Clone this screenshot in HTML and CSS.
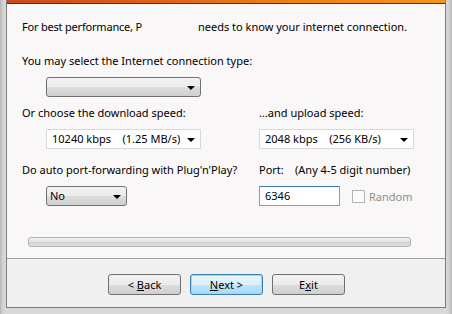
FILE: index.html
```html
<!DOCTYPE html>
<html>
<head>
<meta charset="utf-8">
<link rel="stylesheet" href="styles.css">
</head>
<body>
<div class="frame">
  <div class="dialog">
    <div class="banner"></div>
    <div class="content">
      <p class="intro"><span class="lead">For best performance, P</span><span class="gap"></span>needs to know your internet connection.</p>
      <p class="label">You may select the Internet connection type:</p>
      <div class="combo combo-btn w155"><span class="val"></span><i class="arrow"></i></div>
      <div class="grid">
        <div class="cell">
          <p class="label">Or choose the download speed:</p>
          <div class="combo combo-list w155"><span class="val">10240 kbps    (1.25 MB/s)</span><i class="arrow"></i></div>
        </div>
        <div class="cell">
          <p class="label">...and upload speed:</p>
          <div class="combo combo-list w155 flush"><span class="val">2048 kbps    (256 KB/s)</span><i class="arrow"></i></div>
        </div>
        <div class="cell">
          <p class="label">Do auto port-forwarding with Plug'n'Play?</p>
          <div class="combo combo-btn w81"><span class="val">No</span><i class="arrow"></i></div>
        </div>
        <div class="cell">
          <p class="label port-label"><span class="port-word">Port:</span>(Any 4-5 digit number)</p>
          <div class="port-row">
            <div class="input">6346</div>
            <label class="check"><span class="box"></span>Random</label>
          </div>
        </div>
      </div>
      <div class="progress"></div>
    </div>
    <div class="footer">
      <button class="btn">&lt; <u>B</u>ack</button>
      <button class="btn btn-default"><u>N</u>ext &gt;</button>
      <button class="btn">E<u>x</u>it</button>
    </div>
  </div>
</div>
</body>
</html>
```

FILE: styles.css
```css
html, body {
  margin: 0;
  padding: 0;
}
body {
  width: 452px;
  height: 314px;
  overflow: hidden;
  background: #d6d6d6;
  font-family: "Noto Sans", "Open Sans", sans-serif;
  font-size: 11px;
  color: #000;
}
.frame {
  width: 452px;
  height: 314px;
  box-sizing: border-box;
  padding: 0 6px 6px 6px;
  background: linear-gradient(to right, #b4b4b4 0, #cdcdcd 2px, #d9d9d9 5px, #d9d9d9 446px, #cdcdcd 450px, #b4b4b4 452px);
}
.dialog {
  height: 308px;
  box-sizing: border-box;
  border: 1px solid #7c7c7c;
  border-top: none;
  display: flex;
  flex-direction: column;
  background: #f0f0f0;
}
.banner {
  height: 3px;
  background: linear-gradient(to right, #c8481e 0, #de6418 35%, #ec7c14 60%, #f59418 100%);
  border-bottom: 1px solid #6e2a08;
}
.content {
  background: #f9f7f7;
  border-bottom: 1px solid #a0a0a0;
  padding: 15px 0 0 15px;
  height: 255px;
  box-sizing: border-box;
}
p {
  margin: 0;
  line-height: 16px;
  white-space: nowrap;
}
.intro {
  display: flex;
}
.intro .lead {
  display: inline-block;
  width: 176px;
  letter-spacing: -0.2px;
}
.content > .label {
  margin-top: 18px;
}
.combo {
  box-sizing: border-box;
  height: 20px;
  display: flex;
  align-items: center;
  justify-content: space-between;
  padding: 0 5px 0 5px;
  margin: 8px 0 0 24px;
}
.w155 { width: 155px; }
.w81 { width: 81px; }
.combo .val {
  line-height: 18px;
  white-space: pre;
}
.combo-btn {
  border: 1px solid #707070;
  border-radius: 3px;
  background: linear-gradient(to bottom, #f2f2f2 0, #ebebeb 50%, #dddddd 51%, #cfcfcf 100%);
  padding-left: 3px;
}
.combo-list {
  border: 1px solid #d9d9d9;
  background: #fff;
}
.combo-list.flush { margin-left: 0; }
.arrow {
  width: 0;
  height: 0;
  border-left: 4px solid transparent;
  border-right: 4px solid transparent;
  border-top: 4px solid #000;
  margin-top: 1px;
}
.grid {
  display: grid;
  grid-template-columns: 237px 1fr;
  row-gap: 13px;
  margin-top: 8px;
}
.port-word {
  display: inline-block;
  width: 36px;
}
.port-row {
  display: flex;
  align-items: center;
  margin-top: 8px;
}
.input {
  box-sizing: border-box;
  width: 81px;
  height: 20px;
  border: 1px solid #69a6d6;
  border-top-color: #3d7bad;
  background: #fff;
  line-height: 18px;
  padding-left: 5px;
}
.check {
  display: flex;
  align-items: center;
  color: #8d8d8d;
  margin-left: 12px;
}
.box {
  box-sizing: border-box;
  width: 13px;
  height: 13px;
  border: 1px solid #b4b4b4;
  background: #fafafa;
  margin-right: 4px;
}
.progress {
  box-sizing: border-box;
  width: 383px;
  height: 10px;
  margin: 31px 0 0 6px;
  border: 1px solid #b2b2b2;
  border-radius: 3px;
  background: linear-gradient(to bottom, #f3f3f3 0, #e2e2e2 45%, #d2d2d2 55%, #dedede 100%);
}
.footer {
  flex: 1;
  display: flex;
  gap: 9px;
  padding-top: 15px;
  padding-left: 101px;
  box-sizing: border-box;
  background: #f0f0f0;
}
.btn {
  box-sizing: border-box;
  width: 73px;
  height: 21px;
  border: 1px solid #707070;
  border-radius: 3px;
  background: linear-gradient(to bottom, #f2f2f2 0, #ebebeb 50%, #dddddd 51%, #cfcfcf 100%);
  font-family: "Noto Sans", "Open Sans", sans-serif;
  font-size: 11px;
  color: #000;
  padding: 0;
  line-height: 19px;
}
.btn u { text-decoration: underline; }
.btn-default {
  border-color: #3c7fb1;
  background: linear-gradient(to bottom, #eaf6fd 0, #d9f0fc 50%, #bee6fd 51%, #a7d9f5 100%);
  box-shadow: inset 0 0 0 1px #9ad8f4;
}
```
